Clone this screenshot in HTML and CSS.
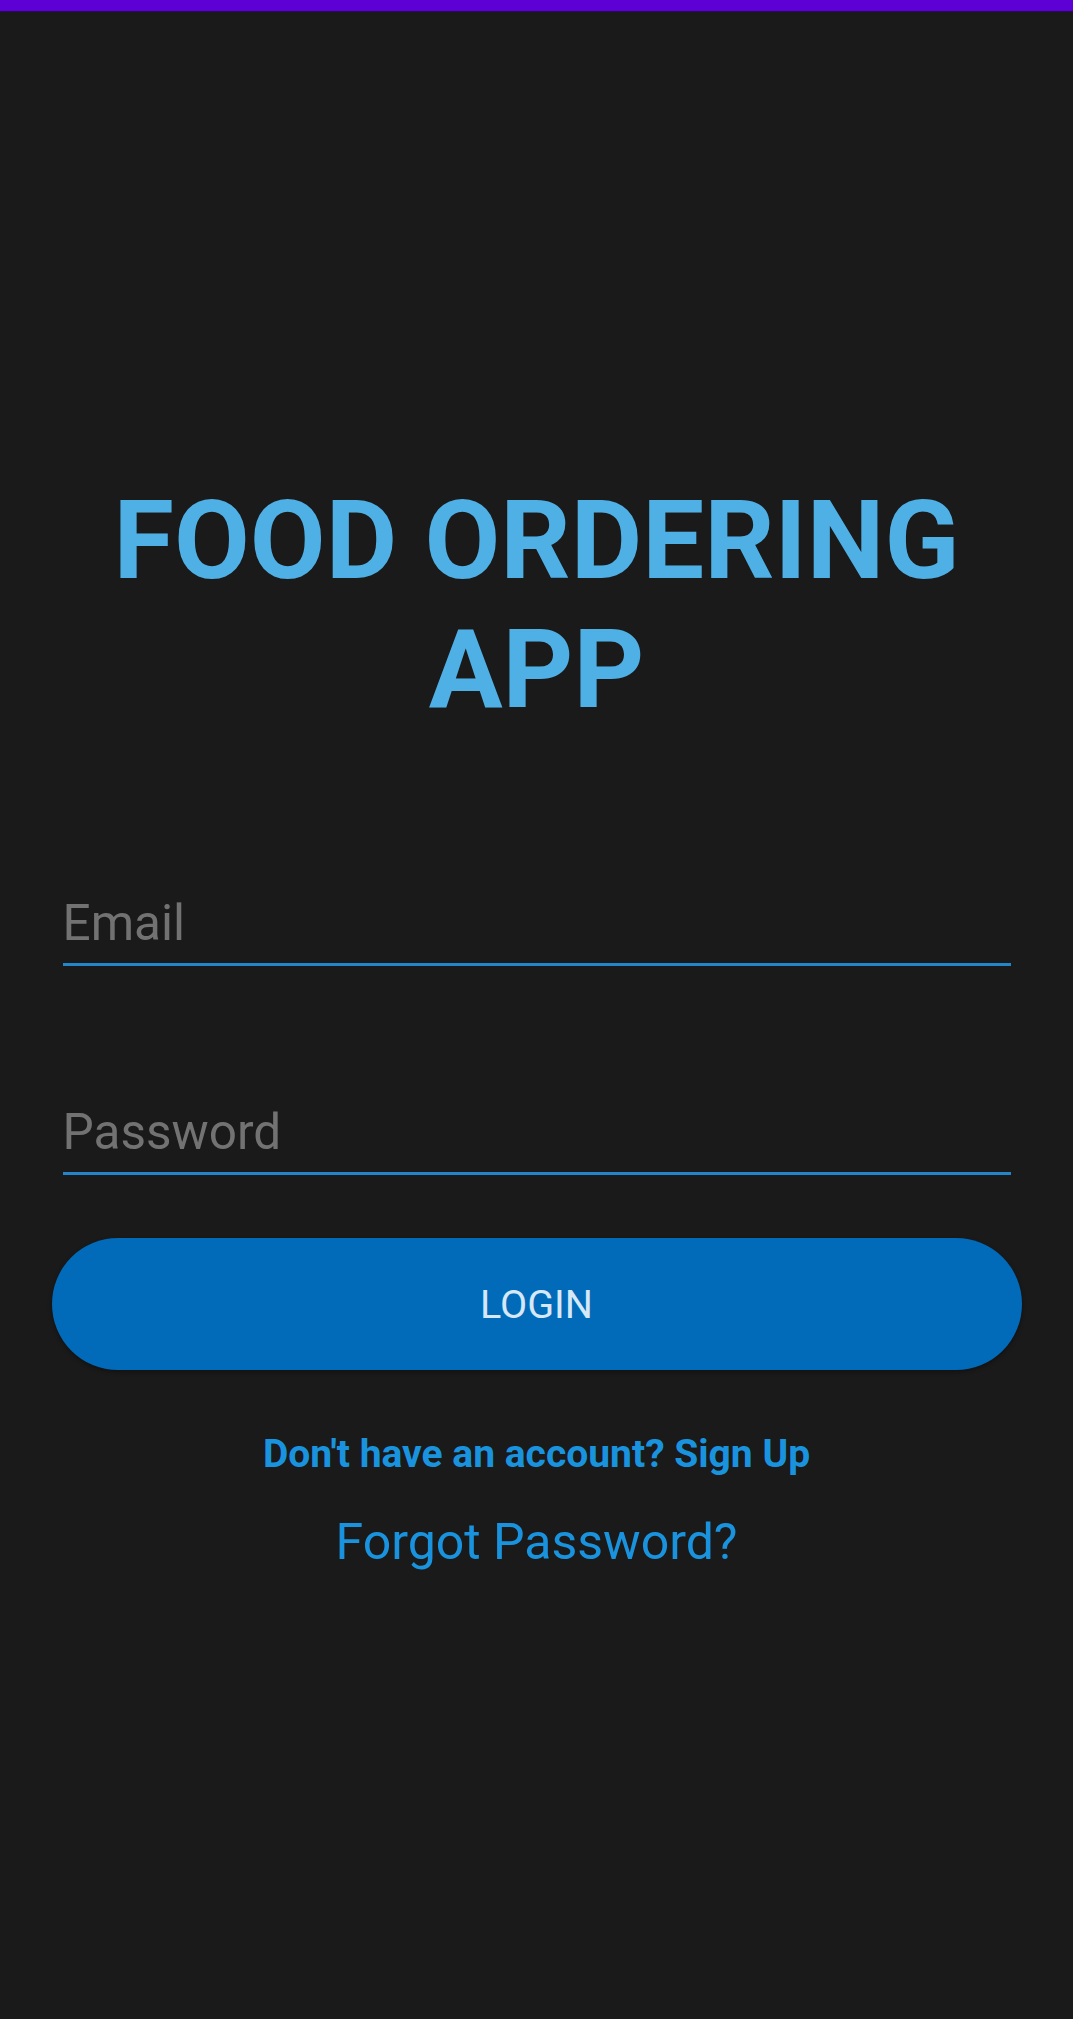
FILE: index.html
```html
<!DOCTYPE html>
<html lang="en">
<head>
<meta charset="utf-8">
<title>Food Ordering App - Login</title>
<link rel="stylesheet" href="styles.css">
</head>
<body>
<div class="status-bar"></div>
<main class="screen">
  <h1 class="title">FOOD ORDERING<br>APP</h1>
  <form class="form">
    <label class="field field-email">
      <input class="field-input" type="email" placeholder="Email">
    </label>
    <label class="field field-password">
      <input class="field-input" type="password" placeholder="Password">
    </label>
    <button class="login-btn" type="button">LOGIN</button>
  </form>
  <a class="signup-link" href="#">Don't have an account? Sign Up</a>
  <a class="forgot-link" href="#">Forgot Password?</a>
</main>
</body>
</html>
```
FILE: styles.css
```css
* { box-sizing: border-box; }
html, body {
  margin: 0;
  padding: 0;
  background: #1a1a1a;
  font-family: Roboto, "Noto Sans", "Liberation Sans", sans-serif;
}
body { min-height: 2019px; }

.status-bar {
  height: 12px;
  background: #5c00d6;
  border-bottom: 1px solid #2c0b52;
}

.screen {
  display: flex;
  flex-direction: column;
  align-items: center;
  padding: 464px 0 0;
}

.title {
  margin: 0;
  font-size: 110px;
  font-weight: 700;
  line-height: 129px;
  color: #4fb0e6;
  text-align: center;
}

.form {
  width: 100%;
  display: flex;
  flex-direction: column;
  align-items: center;
  margin-top: 149px;
}

.field {
  display: block;
  width: 948px;
  border-bottom: 3px solid #2585c9;
}
.field-password { margin-top: 126px; }

.field-input {
  display: block;
  width: 100%;
  height: 80px;
  padding: 0;
  margin: 0;
  border: 0;
  outline: none;
  background: transparent;
  font-family: Roboto, "Noto Sans", sans-serif;
  font-size: 49.5px;
  color: #dddddd;
}
.field-input::placeholder { color: #727272; }

.login-btn {
  margin-top: 63px;
  width: 970px;
  height: 132px;
  border: 0;
  border-radius: 66px;
  background: #026bb9;
  color: #d6e8f6;
  font-family: Roboto, "Noto Sans", sans-serif;
  font-size: 39.5px;
  font-weight: 400;
  display: flex;
  align-items: center;
  justify-content: center;
  box-shadow: 0 2px 4px rgba(0,0,0,0.35);
}

.signup-link {
  margin-top: 61px;
  font-size: 39px;
  font-weight: 700;
  line-height: 46px;
  color: #1a93df;
  text-decoration: none;
}

.forgot-link {
  margin-top: 36px;
  font-size: 50px;
  font-weight: 400;
  line-height: 58px;
  color: #1a93df;
  text-decoration: none;
}
```
